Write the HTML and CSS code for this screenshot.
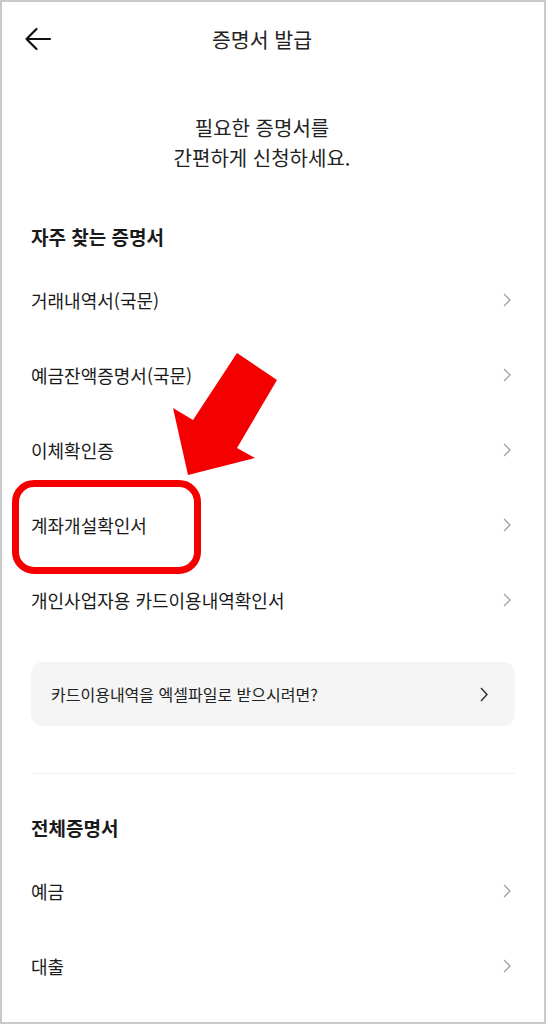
FILE: index.html
```html
<!DOCTYPE html>
<html lang="ko">
<head>
    <meta charset="UTF-8">
    <meta name="viewport" content="width=device-width, initial-scale=1.0">
    <title>증명서 발급</title>
    <link rel="stylesheet" href="styles.css">
</head>
<body>
<div class="frame">
    <header class="top-bar">
        <button class="back" aria-label="뒤로">
            <svg width="28" height="24" viewBox="0 0 28 24"><path d="M26 12H2.5M12.5 2L2.5 12l10 10" fill="none" stroke="#111" stroke-width="2.2" stroke-linecap="round" stroke-linejoin="round"/></svg>
        </button>
        <h1 class="title">증명서 발급</h1>
    </header>

    <p class="intro">필요한 증명서를<br>간편하게 신청하세요.</p>

    <main class="content">
        <h2 class="section-title">자주 찾는 증명서</h2>
        <ul class="list">
            <li class="item"><span>거래내역서(국문)</span><svg class="chev" width="8" height="14" viewBox="0 0 8 14"><path d="M1 1l6 6-6 6" fill="none" stroke="#a0a0a0" stroke-width="1.3"/></svg></li>
            <li class="item"><span>예금잔액증명서(국문)</span><svg class="chev" width="8" height="14" viewBox="0 0 8 14"><path d="M1 1l6 6-6 6" fill="none" stroke="#a0a0a0" stroke-width="1.3"/></svg></li>
            <li class="item"><span>이체확인증</span><svg class="chev" width="8" height="14" viewBox="0 0 8 14"><path d="M1 1l6 6-6 6" fill="none" stroke="#a0a0a0" stroke-width="1.3"/></svg></li>
            <li class="item"><span>계좌개설확인서</span><svg class="chev" width="8" height="14" viewBox="0 0 8 14"><path d="M1 1l6 6-6 6" fill="none" stroke="#a0a0a0" stroke-width="1.3"/></svg></li>
            <li class="item"><span>개인사업자용 카드이용내역확인서</span><svg class="chev" width="8" height="14" viewBox="0 0 8 14"><path d="M1 1l6 6-6 6" fill="none" stroke="#a0a0a0" stroke-width="1.3"/></svg></li>
        </ul>

        <div class="notice">
            <span>카드이용내역을 엑셀파일로 받으시려면?</span>
            <svg width="8" height="15" viewBox="0 0 8 15"><path d="M1 1l6 6.5-6 6.5" fill="none" stroke="#333" stroke-width="1.5"/></svg>
        </div>

        <hr class="divider">

        <h2 class="section-title">전체증명서</h2>
        <ul class="list">
            <li class="item"><span>예금</span><svg class="chev" width="8" height="14" viewBox="0 0 8 14"><path d="M1 1l6 6-6 6" fill="none" stroke="#a0a0a0" stroke-width="1.3"/></svg></li>
            <li class="item"><span>대출</span><svg class="chev" width="8" height="14" viewBox="0 0 8 14"><path d="M1 1l6 6-6 6" fill="none" stroke="#a0a0a0" stroke-width="1.3"/></svg></li>
        </ul>
    </main>

    <!-- annotation overlay -->
    <div class="highlight"></div>
    <svg class="pointer" width="546" height="1024" viewBox="0 0 546 1024">
        <polygon points="237,353 277,380 237,448 255,458 188,475 173,408 193,420" fill="#f50000"/>
    </svg>
</div>
</body>
</html>
```

FILE: styles.css
```css
body {
    margin: 0;
    font-family: "Noto Sans CJK KR", "Noto Sans", sans-serif;
    color: #1a1a1a;
    background: #fff;
}
.frame {
    position: relative;
    box-sizing: border-box;
    width: 546px;
    height: 1024px;
    border: 2px solid #c9c9c9;
    overflow: hidden;
}
.top-bar {
    position: relative;
    height: 74px;
    padding-right: 22px;
    display: flex;
    align-items: center;
    justify-content: center;
}
.back {
    position: absolute;
    left: 22px;
    top: 25px;
    padding: 0;
    border: none;
    background: none;
    display: flex;
}
.title {
    margin: 0;
    font-size: 20.5px;
    font-weight: 400;
    color: #222;
}
.intro {
    margin: 37px 0 0;
    padding-right: 22px;
    text-align: center;
    font-size: 20px;
    line-height: 30px;
    color: #222;
}
.content {
    padding: 0 29px;
}
.section-title {
    margin: 51px 0 12px;
    font-size: 19px;
    line-height: 26px;
    font-weight: 700;
    color: #1a1a1a;
}
.list {
    list-style: none;
    margin: 0;
    padding: 0;
}
.item {
    height: 75px;
    display: flex;
    align-items: center;
    justify-content: space-between;
    font-size: 18px;
    color: #1a1a1a;
}
.chev {
    margin-right: 4px;
}
.notice {
    margin-top: 25px;
    height: 64px;
    box-sizing: border-box;
    padding: 0 27px 0 20px;
    border-radius: 12px;
    background: #f5f5f5;
    display: flex;
    align-items: center;
    justify-content: space-between;
    font-size: 16px;
    color: #222;
}
.divider {
    margin: 47px 0 0;
    border: none;
    border-top: 1px solid #f0f0f0;
}
.divider + .section-title {
    margin-top: 41px;
}
.highlight {
    position: absolute;
    left: 10px;
    top: 478px;
    width: 189px;
    height: 94px;
    box-sizing: border-box;
    border: 7px solid #f50000;
    border-radius: 22px;
}
.pointer {
    position: absolute;
    left: -2px;
    top: -2px;
}
```
